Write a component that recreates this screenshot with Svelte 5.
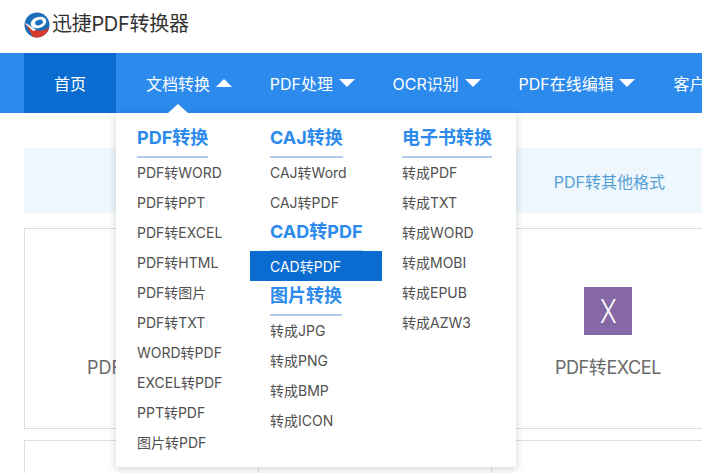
<script>
    const navItems = [
        { label: "文档转换", open: true },
        { label: "PDF处理" },
        { label: "OCR识别" },
        { label: "PDF在线编辑" },
    ];

    const menuColumns = [
        [
            {
                title: "PDF转换",
                links: ["PDF转WORD", "PDF转PPT", "PDF转EXCEL", "PDF转HTML", "PDF转图片", "PDF转TXT", "WORD转PDF", "EXCEL转PDF", "PPT转PDF", "图片转PDF"],
            },
        ],
        [
            { title: "CAJ转换", links: ["CAJ转Word", "CAJ转PDF"] },
            { title: "CAD转PDF", links: ["CAD转PDF"] },
            { title: "图片转换", links: ["转成JPG", "转成PNG", "转成BMP", "转成ICON"] },
        ],
        [
            { title: "电子书转换", links: ["转成PDF", "转成TXT", "转成WORD", "转成MOBI", "转成EPUB", "转成AZW3"] },
        ],
    ];

    const activeLink = "CAD转PDF";
</script>

<div class="page">
    <header class="top">
        <svg class="logo" viewBox="0 0 26 26" width="26" height="26" aria-hidden="true">
            <circle cx="13" cy="13" r="12.5" fill="#1b6fb8" />
            <ellipse cx="14.5" cy="10.5" rx="8" ry="5.5" transform="rotate(-18 14.5 10.5)" fill="#fff" />
            <ellipse cx="15" cy="10.5" rx="4" ry="2.6" transform="rotate(-18 15 10.5)" fill="#1b6fb8" />
            <path d="M0.6 11 C5 14 9 18 14 18.5 C18 19 22 18 25 15.5 C24 21 19 25.5 13 25.5 C11 25.5 9.5 25 8.5 24.5 C6.5 20 3.5 15 0.6 11 Z" fill="#d63a2c" />
            <path d="M0.6 11 C4 12 8 15 12 18 L9 19 C6 16 3 13 0.6 11 Z" fill="#fff" />
        </svg>
        <span class="brand">迅捷PDF转换器</span>
    </header>

    <nav class="nav">
        <a class="nav-item home" href="#home">首页</a>
        {#each navItems as item}
            <a class="nav-item" href="#menu">
                {item.label}
                <span class="arrow" class:up={item.open}></span>
            </a>
        {/each}
        <a class="nav-item" href="#kefu">客户端</a>

        <div class="dropdown">
            <span class="notch"></span>
            {#each menuColumns as column}
                <div class="menu-col">
                    {#each column as group}
                        <div class="group">
                            <h3>{group.title}</h3>
                            {#each group.links as link}
                                <a class="menu-link" class:active={link === activeLink} href="#link">{link}</a>
                            {/each}
                        </div>
                    {/each}
                </div>
            {/each}
        </div>
    </nav>

    <main class="content">
        <div class="banner">
            <span>PDF转其他格式</span>
        </div>
        <div class="cards">
            <div class="card">
                <div class="card-label">PDF转WORD</div>
            </div>
            <div class="card">
                <div class="card-label">PDF转PPT</div>
            </div>
            <div class="card">
                <div class="tile"><span>X</span></div>
                <div class="card-label">PDF转EXCEL</div>
            </div>
            <div class="card"></div>
            <div class="card"></div>
            <div class="card"></div>
        </div>
    </main>
</div>

<style>
    :global(body) {
        margin: 0;
        background: #fff;
    }

    .page {
        width: 702px;
        height: 473px;
        overflow: hidden;
        font-family: Inter, "Noto Sans CJK SC", sans-serif;
    }

    .top {
        height: 53px;
        display: flex;
        align-items: flex-start;
        padding: 12px 0 0 24px;
        box-sizing: border-box;
    }

    .logo {
        flex-shrink: 0;
    }

    .brand {
        font-size: 20px;
        line-height: 24px;
        color: #333;
        margin-left: 2px;
        letter-spacing: -0.3px;
    }

    .nav {
        position: relative;
        height: 60px;
        padding-left: 24px;
        background: #2b8aec;
        display: flex;
        white-space: nowrap;
    }

    .nav-item {
        display: flex;
        align-items: center;
        gap: 5.7px;
        padding: 0 19px 1px;
        font-size: 16px;
        color: #fff;
        text-decoration: none;
        flex-shrink: 0;
    }

    .home {
        width: 92px;
        box-sizing: border-box;
        justify-content: center;
        background: #0a6cd0;
        padding: 0 0 1px;
        margin-right: 11px;
    }

    .arrow {
        width: 0;
        height: 0;
        border-left: 8px solid transparent;
        border-right: 8px solid transparent;
        border-top: 8px solid #fff;
    }

    .arrow.up {
        border-top: 0;
        border-bottom: 8px solid #fff;
    }

    .dropdown {
        position: absolute;
        left: 116px;
        top: 60px;
        width: 400px;
        height: 354px;
        box-sizing: border-box;
        padding: 11px 0 0 1px;
        background: #fff;
        box-shadow: 0 2px 8px rgba(0, 0, 0, 0.18);
        display: flex;
        z-index: 2;
    }

    .notch {
        position: absolute;
        left: 52px;
        top: -9px;
        width: 0;
        height: 0;
        border-left: 10px solid transparent;
        border-right: 10px solid transparent;
        border-bottom: 9px solid #fff;
    }

    .menu-col {
        width: 132px;
        flex-shrink: 0;
    }

    .menu-col:first-of-type {
        width: 133px;
    }

    .group h3 {
        display: table;
        margin: 0 0 0 20px;
        height: 34px;
        line-height: 28px;
        font-size: 18px;
        font-weight: 700;
        color: #2b8aec;
        border-bottom: 2px solid #b3cdea;
        box-sizing: border-box;
    }

    .menu-link {
        display: block;
        height: 30px;
        line-height: 30px;
        padding-left: 20px;
        font-size: 14px;
        color: #505050;
        text-decoration: none;
    }

    .menu-link.active {
        background: #0a6cd0;
        color: #fff;
        margin: -1px 0 1px;
        line-height: 32px;
    }

    .content {
        padding: 35px 0 0 24px;
    }

    .banner {
        height: 65px;
        background: #eef7fc;
        display: flex;
        align-items: center;
        justify-content: flex-end;
        padding-right: 37px;
        font-size: 16px;
        color: #559fd6;
    }

    .cards {
        margin-top: 15px;
        width: 702px;
        display: grid;
        grid-template-columns: 234px 233px 234px;
        grid-auto-rows: 201px;
        row-gap: 11px;
    }

    .card {
        border: 1px solid #ddd;
        margin-right: -1px;
        box-sizing: border-box;
        display: flex;
        flex-direction: column;
        align-items: center;
        justify-content: flex-end;
        padding-bottom: 49px;
    }

    .card:nth-child(3n) {
        margin-right: 0;
    }

    .tile {
        width: 48px;
        height: 48px;
        background: #8668a6;
        color: #fff;
        font-family: Roboto, sans-serif;
        font-weight: 300;
        font-size: 34px;
        line-height: 48px;
        text-align: center;
        margin-bottom: 18px;
    }

    .tile span {
        display: inline-block;
        transform: scaleX(0.8);
    }

    .card-label {
        font-size: 18px;
        color: #6a6a6a;
        white-space: nowrap;
    }

    .tile + .card-label {
        letter-spacing: -0.4px;
    }
</style>
